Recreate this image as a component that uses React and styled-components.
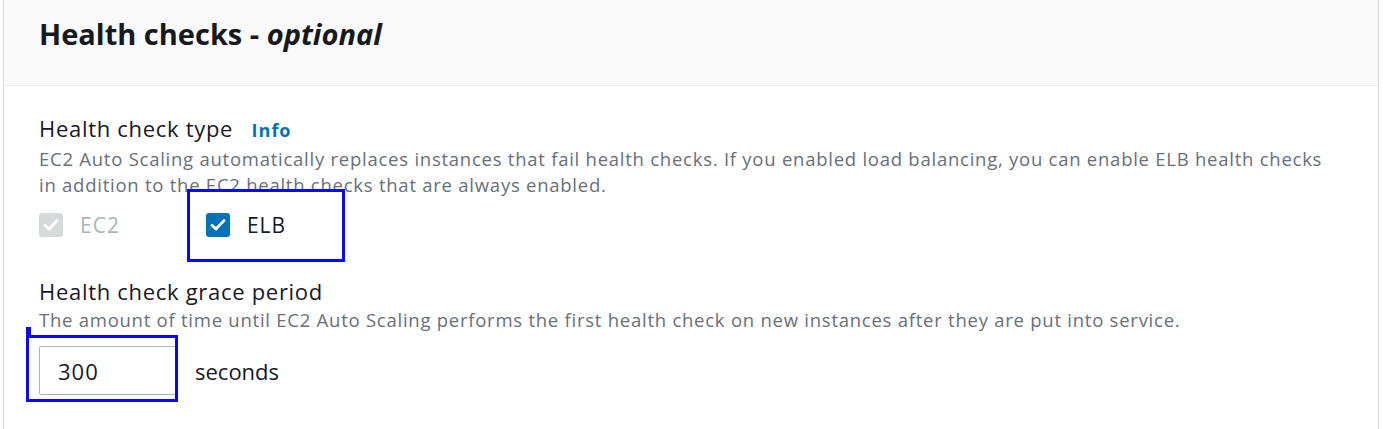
import React from "react";
import styled, { createGlobalStyle } from "styled-components";

const GlobalStyle = createGlobalStyle`
  html, body {
    margin: 0;
    padding: 0;
    background: #ffffff;
    font-family: "Open Sans", "Noto Sans", Arial, sans-serif;
  }
`;

function CheckIcon() {
  return (
    <svg width="20" height="20" viewBox="0 0 20 20">
      <path d="M4 10.2l4 3.8L16 5.6" fill="none" stroke="#ffffff" strokeWidth="2.8" strokeLinecap="round" strokeLinejoin="round" />
    </svg>
  );
}

function Checkbox({ label, checked, disabled }) {
  return (
    <CheckRow>
      <Box $disabled={disabled} $checked={checked}>
        {checked && <CheckIcon />}
      </Box>
      <CheckLabel $disabled={disabled}>{label}</CheckLabel>
    </CheckRow>
  );
}

export default function App() {
  return (
    <>
      <GlobalStyle />
      <Panel>
        <Header>
          <Title>
            Health checks - <em>optional</em>
          </Title>
        </Header>
        <Body>
          <Field>
            <Label>
              Health check type <InfoLink>Info</InfoLink>
            </Label>
            <Description>
              EC2 Auto Scaling automatically replaces instances that fail health checks. If you enabled load balancing, you can enable ELB health checks
              in addition to the EC2 health checks that are always enabled.
            </Description>
            <Options>
              <Checkbox label="EC2" checked disabled />
              <Highlighted>
                <Checkbox label="ELB" checked />
                <Marker $top={-22} $left={-19} $width={158} $height={73} />
              </Highlighted>
            </Options>
          </Field>
          <Field>
            <Label>Health check grace period</Label>
            <Description>
              The amount of time until EC2 Auto Scaling performs the first health check on new instances after they are put into service.
            </Description>
            <InputRow>
              <Highlighted>
                <NumberInput defaultValue="300" />
                <Marker $top={-11} $left={-13} $width={152} $height={67} $tick />
              </Highlighted>
              <Unit>seconds</Unit>
            </InputRow>
          </Field>
        </Body>
      </Panel>
    </>
  );
}

const Panel = styled.div`
  margin-left: 3px;
  width: 1376px;
  height: 429px;
  box-sizing: border-box;
  border-left: 1px solid #d5dbdb;
  border-right: 1px solid #d5dbdb;
  background: #ffffff;
  overflow: hidden;
`;

const Header = styled.div`
  height: 86px;
  box-sizing: border-box;
  background: #fafafa;
  border-bottom: 1px solid #eaeded;
  padding: 14px 0 0 35px;
`;

const Title = styled.h2`
  margin: 0;
  font-size: 29px;
  line-height: 40px;
  font-weight: 700;
  color: #16191f;

  em {
    font-style: italic;
  }
`;

const Body = styled.div`
  padding: 28px 35px 0;
  display: flex;
  flex-direction: column;
  gap: 32px;
`;

const Field = styled.div`
  display: flex;
  flex-direction: column;
`;

const Label = styled.div`
  font-size: 22px;
  line-height: 28px;
  letter-spacing: 0.7px;
  color: #16191f;
`;

const InfoLink = styled.span`
  margin-left: 12px;
  font-size: 18px;
  font-weight: 700;
  letter-spacing: 1px;
  color: #0073bb;
`;

const Description = styled.div`
  max-width: 1295px;
  margin-top: 2px;
  font-size: 18.5px;
  line-height: 26px;
  letter-spacing: 0.75px;
  color: #687078;
`;

const Options = styled.div`
  display: flex;
  align-items: center;
  gap: 86px;
  margin-top: 7px;
  height: 40px;
`;

const CheckRow = styled.label`
  display: flex;
  align-items: center;
  gap: 17px;
`;

const Box = styled.span`
  width: 24px;
  height: 24px;
  border-radius: 3px;
  display: flex;
  align-items: center;
  justify-content: center;
  background: ${(p) => (p.$disabled ? "#d5dbdb" : "#0073bb")};
`;

const CheckLabel = styled.span`
  font-size: 21px;
  letter-spacing: 1px;
  color: ${(p) => (p.$disabled ? "#aab7b8" : "#16191f")};
`;

const Highlighted = styled.div`
  position: relative;
`;

const Marker = styled.div`
  position: absolute;
  top: ${(p) => p.$top}px;
  left: ${(p) => p.$left}px;
  width: ${(p) => p.$width}px;
  height: ${(p) => p.$height}px;
  box-sizing: border-box;
  border: 3px solid #0a0af0;
  pointer-events: none;

  ${(p) =>
    p.$tick &&
    `
    &::before {
      content: "";
      position: absolute;
      left: -3px;
      top: -11px;
      width: 5px;
      height: 11px;
      background: #0a0af0;
    }
  `}
`;

const InputRow = styled.div`
  display: flex;
  align-items: center;
  gap: 19px;
  margin-top: 13px;
`;

const NumberInput = styled.input`
  width: 137px;
  height: 49px;
  box-sizing: border-box;
  border: 1px solid #aab7b8;
  border-radius: 2px;
  padding: 0 18px;
  font-family: inherit;
  font-size: 22px;
  letter-spacing: 1px;
  color: #16191f;
  outline: none;
`;

const Unit = styled.span`
  font-size: 22px;
  color: #16191f;
`;
